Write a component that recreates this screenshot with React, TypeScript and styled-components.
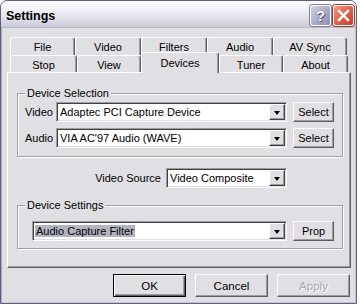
import React from 'react'
import styled, { createGlobalStyle } from 'styled-components'

const GlobalStyle = createGlobalStyle`
  html, body { margin: 0; padding: 0; background: #ffffff; }
  body {
    font-family: "Liberation Sans", Arial, sans-serif;
    font-size: 11px;
    color: #000;
  }
`

const face = '#e0dfe3'

const Window = styled.div`
  width: 357px;
  height: 304px;
  box-sizing: border-box;
  border: 1px solid #5f5f7e;
  border-radius: 7px 7px 0 0;
  background: ${face};
  display: flex;
  flex-direction: column;
  overflow: hidden;
  box-shadow: inset 1px 0 #a9a9c2, inset -1px -1px #c4c4d4;
`

const TitleBar = styled.div`
  height: 27px;
  flex-shrink: 0;
  box-sizing: border-box;
  padding: 4px 2px 0 5px;
  display: flex;
  align-items: flex-start;
  background: linear-gradient(#ffffff 0%, #f3f3f7 30%, #dedee8 70%, #cacad8 100%);
  border-bottom: 1px solid #b9b9c9;
`

const Title = styled.div`
  flex: 1;
  font-weight: bold;
  font-size: 12.5px;
  line-height: 20px;
  padding-top: 1px;
`

const CaptionButton = styled.div<{ $kind: 'help' | 'close' }>`
  width: 21px;
  height: 21px;
  box-sizing: border-box;
  margin-left: 2px;
  border: 1px solid #ffffff;
  border-radius: 3px;
  display: flex;
  align-items: center;
  justify-content: center;
  color: #fff;
  font-weight: bold;
  font-size: 15px;
  background: ${p =>
    p.$kind === 'help'
      ? 'linear-gradient(135deg, #d2d3e6 0%, #a7a9c8 55%, #8d8fb4 100%)'
      : 'linear-gradient(135deg, #ef9c88 0%, #d9604a 55%, #c0402c 100%)'};
  box-shadow: 0 0 0 1px ${p => (p.$kind === 'help' ? '#7c7ea3' : '#a33c2b')};
`

const HelpMark = styled.span`
  font-family: "Liberation Sans", Arial, sans-serif;
  text-shadow: 0 0 1px #44466a, 1px 1px 0 #5d5f86;
  line-height: 1;
`

const Body = styled.div`
  flex: 1;
  padding: 9px 5px 0 6px;
  display: flex;
  flex-direction: column;
`

const TabRow = styled.div`
  display: flex;
  margin-left: 3px;
  height: 17px;
  &:first-child { height: 18px; }
`

const Tab = styled.div<{ $w: number; $active?: boolean }>`
  width: ${p => p.$w}px;
  box-sizing: border-box;
  height: ${p => (p.$active ? '21px' : '100%')};
  margin-top: ${p => (p.$active ? '-3px' : '0')};
  margin-bottom: ${p => (p.$active ? '-1px' : '0')};
  position: relative;
  z-index: ${p => (p.$active ? 2 : 0)};
  background: ${face};
  border-top: 1px solid #ffffff;
  border-left: 1px solid #ffffff;
  border-right: 1px solid #5f5f63;
  box-shadow: inset -1px 0 #9d9da1;
  border-radius: 3px 3px 0 0;
  display: flex;
  align-items: center;
  justify-content: center;
  padding-top: ${p => (p.$active ? '0' : '1px')};
`

const Panel = styled.div`
  height: 196px;
  box-sizing: border-box;
  border-top: 1px solid #ffffff;
  border-left: 1px solid #ffffff;
  border-right: 1px solid #5f5f63;
  border-bottom: 1px solid #5f5f63;
  box-shadow: inset -1px -1px #9d9da1;
  display: flex;
  flex-direction: column;
`

const Group = styled.fieldset<{ $top: number; $pt: number; $pb: number }>`
  margin: ${p => p.$top}px 7px 0 9px;
  padding: ${p => p.$pt}px 8px ${p => p.$pb}px 7px;
  border: 1px solid #a0a0a4;
  box-shadow: inset 1px 1px #ffffff, 1px 1px #ffffff;
  min-width: 0;
  display: flex;
  flex-direction: column;
  gap: 6px;
`

const Legend = styled.legend`
  padding: 0 2px;
  line-height: 13px;
  background: ${face};
`

const Row = styled.div<{ $indent?: number }>`
  display: flex;
  align-items: center;
  gap: 6px;
  margin-left: ${p => p.$indent || 0}px;
`

const Label = styled.span<{ $w?: number }>`
  width: ${p => (p.$w ? `${p.$w}px` : 'auto')};
  margin-right: -6px;
  white-space: nowrap;
`

const SourceRow = styled.div`
  display: flex;
  align-items: center;
  justify-content: flex-end;
  gap: 5px;
  margin: 11px 63px 0 0;
`

const Combo = styled.div<{ $w: number }>`
  width: ${p => p.$w}px;
  height: 20px;
  box-sizing: border-box;
  background: #ffffff;
  border: 1px solid;
  border-color: #9d9da1 #ffffff #ffffff #9d9da1;
  box-shadow: inset 1px 1px #404040, inset -1px -1px ${face};
  display: flex;
  align-items: center;
  padding: 1px 1px 1px 2px;
`

const ComboText = styled.span<{ $selected?: boolean }>`
  flex: 1;
  white-space: nowrap;
  overflow: hidden;
  line-height: 16px;
  span {
    background: ${p => (p.$selected ? '#b2b4c2' : 'transparent')};
    padding: 0 1px;
  }
`

const DropButton = styled.div`
  width: 16px;
  height: 16px;
  box-sizing: border-box;
  background: ${face};
  border-top: 1px solid #ffffff;
  border-left: 1px solid #ffffff;
  border-right: 1px solid #404040;
  border-bottom: 1px solid #404040;
  box-shadow: inset -1px -1px #9d9da1;
  display: flex;
  align-items: center;
  justify-content: center;
  &::after {
    content: '';
    border-left: 3.5px solid transparent;
    border-right: 3.5px solid transparent;
    border-top: 4px solid #000;
    margin-top: 1px;
  }
`

const Button = styled.div<{ $w: number; $h?: number; $default?: boolean; $disabled?: boolean }>`
  width: ${p => p.$w}px;
  height: ${p => p.$h || 20}px;
  box-sizing: border-box;
  background: ${face};
  border-top: 1px solid ${p => (p.$default ? '#000' : '#ffffff')};
  border-left: 1px solid ${p => (p.$default ? '#000' : '#ffffff')};
  border-right: 1px solid ${p => (p.$default ? '#000' : '#5f5f63')};
  border-bottom: 1px solid ${p => (p.$default ? '#000' : '#5f5f63')};
  box-shadow: ${p =>
    p.$default
      ? 'inset 1px 1px #ffffff, inset -1px -1px #5f5f63, inset -2px -2px #9d9da1'
      : 'inset -1px -1px #9d9da1'};
  display: flex;
  align-items: center;
  justify-content: center;
  color: ${p => (p.$disabled ? '#a8a7ae' : '#000')};
  text-shadow: ${p => (p.$disabled ? '1px 1px #ffffff' : 'none')};
  font-size: ${p => (p.$h ? '11.5px' : '11px')};
`

const Footer = styled.div`
  display: flex;
  justify-content: flex-end;
  gap: 9px;
  margin-top: 6px;
  padding-right: 1px;
`

function ComboBox({ w, text, selected }: { w: number; text: string; selected?: boolean }) {
  return (
    <Combo $w={w}>
      <ComboText $selected={selected}>
        <span>{text}</span>
      </ComboText>
      <DropButton />
    </Combo>
  )
}

const row1 = [
  { name: 'File', w: 65 },
  { name: 'Video', w: 66 },
  { name: 'Filters', w: 66 },
  { name: 'Audio', w: 66 },
  { name: 'AV Sync', w: 74 },
]

const row2 = [
  { name: 'Stop', w: 67 },
  { name: 'View', w: 64 },
  { name: 'Devices', w: 78, active: true },
  { name: 'Tuner', w: 64 },
  { name: 'About', w: 65 },
]

export default function App() {
  return (
    <>
      <GlobalStyle />
      <Window>
        <TitleBar>
          <Title>Settings</Title>
          <CaptionButton $kind="help">
            <HelpMark>?</HelpMark>
          </CaptionButton>
          <CaptionButton $kind="close">
            <svg width="13" height="13" viewBox="0 0 13 13">
              <path d="M2 2 L11 11 M11 2 L2 11" stroke="#ffffff" strokeWidth="2.4" strokeLinecap="square" />
            </svg>
          </CaptionButton>
        </TitleBar>
        <Body>
          <TabRow>
            {row1.map(t => (
              <Tab key={t.name} $w={t.w}>{t.name}</Tab>
            ))}
          </TabRow>
          <TabRow>
            {row2.map(t => (
              <Tab key={t.name} $w={t.w} $active={t.active}>{t.name}</Tab>
            ))}
          </TabRow>
          <Panel>
            <Group $top={14} $pt={2} $pb={8}>
              <Legend>Device Selection</Legend>
              <Row>
                <Label $w={31}>Video</Label>
                <ComboBox w={231} text="Adaptec PCI Capture Device" />
                <Button $w={41}>Select</Button>
              </Row>
              <Row>
                <Label $w={31}>Audio</Label>
                <ComboBox w={231} text="VIA AC'97 Audio (WAVE)" />
                <Button $w={41}>Select</Button>
              </Row>
            </Group>
            <SourceRow>
              <span>Video Source</span>
              <ComboBox w={121} text="Video Composite" />
            </SourceRow>
            <Group $top={11} $pt={9} $pb={7}>
              <Legend>Device Settings</Legend>
              <Row $indent={7}>
                <ComboBox w={255} text="Audio Capture Filter" selected />
                <Button $w={41}>Prop</Button>
              </Row>
            </Group>
          </Panel>
          <Footer>
            <Button $w={73} $h={23} $default>OK</Button>
            <Button $w={73} $h={23}>Cancel</Button>
            <Button $w={73} $h={23} $disabled>Apply</Button>
          </Footer>
        </Body>
      </Window>
    </>
  )
}
